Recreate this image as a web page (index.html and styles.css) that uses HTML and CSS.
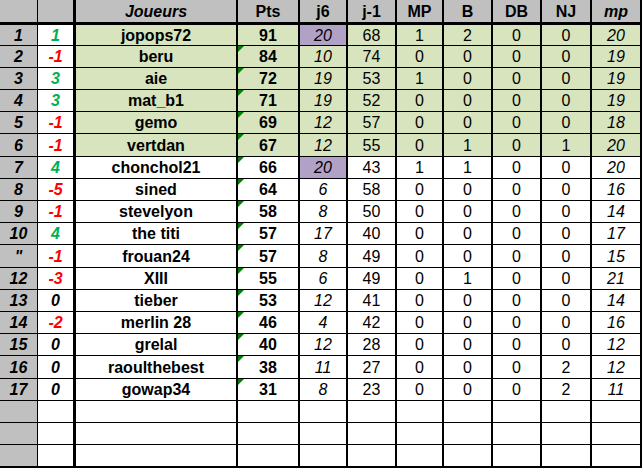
FILE: index.html
```html
<!DOCTYPE html>
<html>
<head>
<meta charset="utf-8">
<link rel="stylesheet" href="styles.css">
</head>
<body>
<table class="grid">
  <thead>
    <tr class="head">
      <th class="c-rank"></th><th class="c-chg"></th><th class="c-name it">Joueurs</th><th class="c-pts">Pts</th><th class="c-j6">j6</th><th class="c-j1">j-1</th><th class="c-mp">MP</th><th class="c-b">B</th><th class="c-db">DB</th><th class="c-nj">NJ</th><th class="c-mpl it">mp</th>
    </tr>
  </thead>
  <tbody>
    <tr class="r1 top"><td class="c-rank">1</td><td class="c-chg up">1</td><td class="c-name">jopops72</td><td class="c-pts">91</td><td class="c-j6 hl">20</td><td class="c-j1">68</td><td class="c-mp">1</td><td class="c-b">2</td><td class="c-db">0</td><td class="c-nj">0</td><td class="c-mpl">20</td></tr>
    <tr class="top"><td class="c-rank">2</td><td class="c-chg down">-1</td><td class="c-name">beru</td><td class="c-pts flag">84</td><td class="c-j6">10</td><td class="c-j1">74</td><td class="c-mp">0</td><td class="c-b">0</td><td class="c-db">0</td><td class="c-nj">0</td><td class="c-mpl">19</td></tr>
    <tr class="top"><td class="c-rank">3</td><td class="c-chg up">3</td><td class="c-name">aie</td><td class="c-pts flag">72</td><td class="c-j6">19</td><td class="c-j1">53</td><td class="c-mp">1</td><td class="c-b">0</td><td class="c-db">0</td><td class="c-nj">0</td><td class="c-mpl">19</td></tr>
    <tr class="top"><td class="c-rank">4</td><td class="c-chg up">3</td><td class="c-name">mat_b1</td><td class="c-pts flag">71</td><td class="c-j6">19</td><td class="c-j1">52</td><td class="c-mp">0</td><td class="c-b">0</td><td class="c-db">0</td><td class="c-nj">0</td><td class="c-mpl">19</td></tr>
    <tr class="top"><td class="c-rank">5</td><td class="c-chg down">-1</td><td class="c-name">gemo</td><td class="c-pts flag">69</td><td class="c-j6">12</td><td class="c-j1">57</td><td class="c-mp">0</td><td class="c-b">0</td><td class="c-db">0</td><td class="c-nj">0</td><td class="c-mpl">18</td></tr>
    <tr class="top tall"><td class="c-rank">6</td><td class="c-chg down">-1</td><td class="c-name">vertdan</td><td class="c-pts flag">67</td><td class="c-j6">12</td><td class="c-j1">55</td><td class="c-mp">0</td><td class="c-b">1</td><td class="c-db">0</td><td class="c-nj">1</td><td class="c-mpl">20</td></tr>
    <tr><td class="c-rank">7</td><td class="c-chg up">4</td><td class="c-name">chonchol21</td><td class="c-pts flag">66</td><td class="c-j6 hl">20</td><td class="c-j1">43</td><td class="c-mp">1</td><td class="c-b">1</td><td class="c-db">0</td><td class="c-nj">0</td><td class="c-mpl">20</td></tr>
    <tr><td class="c-rank">8</td><td class="c-chg down">-5</td><td class="c-name">sined</td><td class="c-pts flag">64</td><td class="c-j6">6</td><td class="c-j1">58</td><td class="c-mp">0</td><td class="c-b">0</td><td class="c-db">0</td><td class="c-nj">0</td><td class="c-mpl">16</td></tr>
    <tr><td class="c-rank">9</td><td class="c-chg down">-1</td><td class="c-name">stevelyon</td><td class="c-pts flag">58</td><td class="c-j6">8</td><td class="c-j1">50</td><td class="c-mp">0</td><td class="c-b">0</td><td class="c-db">0</td><td class="c-nj">0</td><td class="c-mpl">14</td></tr>
    <tr><td class="c-rank">10</td><td class="c-chg up">4</td><td class="c-name">the titi</td><td class="c-pts flag">57</td><td class="c-j6">17</td><td class="c-j1">40</td><td class="c-mp">0</td><td class="c-b">0</td><td class="c-db">0</td><td class="c-nj">0</td><td class="c-mpl">17</td></tr>
    <tr class="tall"><td class="c-rank">"</td><td class="c-chg down">-1</td><td class="c-name">frouan24</td><td class="c-pts flag">57</td><td class="c-j6">8</td><td class="c-j1">49</td><td class="c-mp">0</td><td class="c-b">0</td><td class="c-db">0</td><td class="c-nj">0</td><td class="c-mpl">15</td></tr>
    <tr><td class="c-rank">12</td><td class="c-chg down">-3</td><td class="c-name">XIII</td><td class="c-pts flag">55</td><td class="c-j6">6</td><td class="c-j1">49</td><td class="c-mp">0</td><td class="c-b">1</td><td class="c-db">0</td><td class="c-nj">0</td><td class="c-mpl">21</td></tr>
    <tr><td class="c-rank">13</td><td class="c-chg">0</td><td class="c-name">tieber</td><td class="c-pts flag">53</td><td class="c-j6">12</td><td class="c-j1">41</td><td class="c-mp">0</td><td class="c-b">0</td><td class="c-db">0</td><td class="c-nj">0</td><td class="c-mpl">14</td></tr>
    <tr><td class="c-rank">14</td><td class="c-chg down">-2</td><td class="c-name">merlin 28</td><td class="c-pts flag">46</td><td class="c-j6">4</td><td class="c-j1">42</td><td class="c-mp">0</td><td class="c-b">0</td><td class="c-db">0</td><td class="c-nj">0</td><td class="c-mpl">16</td></tr>
    <tr><td class="c-rank">15</td><td class="c-chg">0</td><td class="c-name">grelal</td><td class="c-pts flag">40</td><td class="c-j6">12</td><td class="c-j1">28</td><td class="c-mp">0</td><td class="c-b">0</td><td class="c-db">0</td><td class="c-nj">0</td><td class="c-mpl">12</td></tr>
    <tr class="tall"><td class="c-rank">16</td><td class="c-chg">0</td><td class="c-name">raoulthebest</td><td class="c-pts flag">38</td><td class="c-j6">11</td><td class="c-j1">27</td><td class="c-mp">0</td><td class="c-b">0</td><td class="c-db">0</td><td class="c-nj">2</td><td class="c-mpl">12</td></tr>
    <tr><td class="c-rank">17</td><td class="c-chg">0</td><td class="c-name">gowap34</td><td class="c-pts flag">31</td><td class="c-j6">8</td><td class="c-j1">23</td><td class="c-mp">0</td><td class="c-b">0</td><td class="c-db">0</td><td class="c-nj">2</td><td class="c-mpl">11</td></tr>
    <tr class="empty"><td class="c-rank"></td><td class="c-chg"></td><td class="c-name"></td><td class="c-pts"></td><td class="c-j6"></td><td class="c-j1"></td><td class="c-mp"></td><td class="c-b"></td><td class="c-db"></td><td class="c-nj"></td><td class="c-mpl"></td></tr>
    <tr class="empty"><td class="c-rank"></td><td class="c-chg"></td><td class="c-name"></td><td class="c-pts"></td><td class="c-j6"></td><td class="c-j1"></td><td class="c-mp"></td><td class="c-b"></td><td class="c-db"></td><td class="c-nj"></td><td class="c-mpl"></td></tr>
    <tr class="empty last"><td class="c-rank"></td><td class="c-chg"></td><td class="c-name"></td><td class="c-pts"></td><td class="c-j6"></td><td class="c-j1"></td><td class="c-mp"></td><td class="c-b"></td><td class="c-db"></td><td class="c-nj"></td><td class="c-mpl"></td></tr>
  </tbody>
</table>
</body>
</html>
```

FILE: styles.css
```css
html, body {
  margin: 0;
  padding: 0;
  background: #ffffff;
}

.grid {
  border-collapse: separate;
  border-spacing: 0;
  table-layout: fixed;
  width: 642px;
  font-family: "Liberation Sans", Arial, sans-serif;
  font-size: 16px;
  color: #000000;
}

.grid th,
.grid td {
  box-sizing: border-box;
  padding: 1px 0 0 0;
  height: 22px;
  text-align: center;
  vertical-align: middle;
  line-height: 18px;
  border-right: 2px solid #000000;
  border-bottom: 1px solid #000000;
  white-space: nowrap;
  overflow: hidden;
}

.grid tr.tall td { height: 23px; }
.grid tr.r1 td { height: 21px; }

/* columns */
.c-rank { width: 38px; border-right-width: 1px !important; background: #c0c0c0; font-weight: bold; font-style: italic; }
.c-chg { width: 38px; border-right-width: 3px !important; font-weight: bold; font-style: italic; }
.c-name { width: 162px; font-weight: bold; }
.c-pts { width: 62px; font-weight: bold; position: relative; }
.c-j6 { width: 48px; font-style: italic; }
.c-j1 { width: 49px; }
.c-mp { width: 47px; }
.c-b { width: 49px; }
.c-db { width: 49px; }
.c-nj { width: 50px; }
.c-mpl { width: 50px; font-style: italic; }

.grid thead th {
  background: #c0c0c0;
  font-weight: bold;
  font-style: normal;
  height: 25px;
  border-bottom: 3px solid #000000;
}

.grid thead th.it { font-style: italic; }

.up { color: #00b050; }
.down { color: #ff0000; }

.top td { background: #d7e4bd; }
.top td.c-rank { background: #c0c0c0; }
.top td.c-chg { background: #ffffff; }
.grid td.hl { background: #b2a1c7; }

.flag::before {
  content: "";
  position: absolute;
  left: 0;
  top: 0;
  border-top: 6px solid #008000;
  border-right: 6px solid transparent;
}

.empty td { height: 22px; }
.empty.last td { height: 23px; border-bottom-width: 2px; }
```
